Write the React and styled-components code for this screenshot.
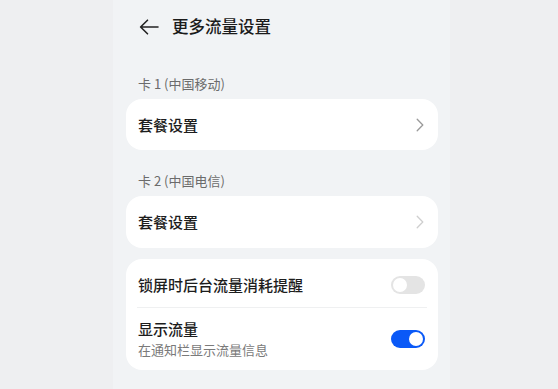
import React from "react";
import styled, { createGlobalStyle } from "styled-components";

const Global = createGlobalStyle`
  html, body { margin: 0; padding: 0; }
  body {
    background: #eeeff1;
    font-family: "Noto Sans CJK SC", "Noto Sans", sans-serif;
    -webkit-font-smoothing: antialiased;
  }
`;

const Screen = styled.div`
  width: 337px;
  min-height: 389px;
  margin-left: 113px;
  background: #f1f3f5;
  padding: 0 12px 0 13px;
  box-sizing: border-box;
`;

const Header = styled.div`
  height: 53px;
  display: flex;
  align-items: center;
  padding-left: 13px;
  gap: 13px;
`;

const Title = styled.div`
  font-size: 16.5px;
  font-weight: 500;
  color: #1b1b1b;
  line-height: 1;
`;

const SectionLabel = styled.div`
  font-size: 13px;
  line-height: 18px;
  color: #6b6b6b;
  padding: 22px 12px 6px;
`;

const Card = styled.div`
  background: #ffffff;
  border-radius: 16px;
  margin-top: ${(p) => p.$mt || 0}px;
  padding: 0 12px;
`;

const Row = styled.div`
  display: flex;
  align-items: center;
  justify-content: space-between;
  height: ${(p) => p.$h}px;
  border-top: ${(p) => (p.$divider ? "1px solid #eff0f1" : "none")};
  box-sizing: border-box;
  margin: 0 ${(p) => (p.$divider ? "-1px" : "0")};
  padding: ${(p) => (p.$pt ? `${p.$pt}px` : "0")} ${(p) => (p.$divider ? "1px" : "0")} 0;
`;

const TextCol = styled.div`
  display: flex;
  flex-direction: column;
`;

const RowTitle = styled.div`
  font-size: 15px;
  font-weight: 500;
  color: #1d1d1d;
  line-height: 20px;
`;

const RowSub = styled.div`
  font-size: 13px;
  color: #7a7a7a;
  line-height: 18px;
  margin-top: 2px;
`;

const Chevron = styled.svg`
  width: 8px;
  height: 14px;
  margin-right: 2px;
  color: ${(p) => (p.$dim ? "#cfcfcf" : "#9a9a9a")};
`;

const Track = styled.div`
  width: 34px;
  height: 18px;
  border-radius: 9px;
  background: ${(p) => (p.$on ? "#0a59f7" : "#e4e4e4")};
  display: flex;
  align-items: center;
  justify-content: ${(p) => (p.$on ? "flex-end" : "flex-start")};
  padding: 0 2px;
  box-sizing: border-box;
  margin-right: 1px;
`;

const Thumb = styled.div`
  width: 14px;
  height: 14px;
  border-radius: 50%;
  background: #ffffff;
`;

const BackArrow = () => (
  <svg width="20" height="16" viewBox="0 0 20 16" fill="none">
    <path
      d="M19 8H1.8M8.5 1.2L1.6 8l6.9 6.8"
      stroke="#222"
      strokeWidth="1.6"
      strokeLinecap="round"
      strokeLinejoin="round"
    />
  </svg>
);

const Arrow = ({ dim }) => (
  <Chevron $dim={dim} viewBox="0 0 8 14" fill="none">
    <path
      d="M1.2 1.2L6.8 7l-5.6 5.8"
      stroke="currentColor"
      strokeWidth="1.3"
      strokeLinecap="round"
      strokeLinejoin="round"
    />
  </Chevron>
);

const Toggle = ({ on }) => (
  <Track $on={on}>
    <Thumb />
  </Track>
);

export default function App() {
  return (
    <>
      <Global />
      <Screen>
        <Header>
          <BackArrow />
          <Title>更多流量设置</Title>
        </Header>

        <SectionLabel>卡 1 (中国移动)</SectionLabel>
        <Card>
          <Row $h={51}>
            <RowTitle>套餐设置</RowTitle>
            <Arrow />
          </Row>
        </Card>

        <SectionLabel>卡 2 (中国电信)</SectionLabel>
        <Card>
          <Row $h={52}>
            <RowTitle>套餐设置</RowTitle>
            <Arrow dim />
          </Row>
        </Card>

        <Card $mt={11}>
          <Row $h={48} $pt={3}>
            <RowTitle>锁屏时后台流量消耗提醒</RowTitle>
            <Toggle on={false} />
          </Row>
          <Row $h={63} $divider>
            <TextCol>
              <RowTitle>显示流量</RowTitle>
              <RowSub>在通知栏显示流量信息</RowSub>
            </TextCol>
            <Toggle on />
          </Row>
        </Card>
      </Screen>
    </>
  );
}
